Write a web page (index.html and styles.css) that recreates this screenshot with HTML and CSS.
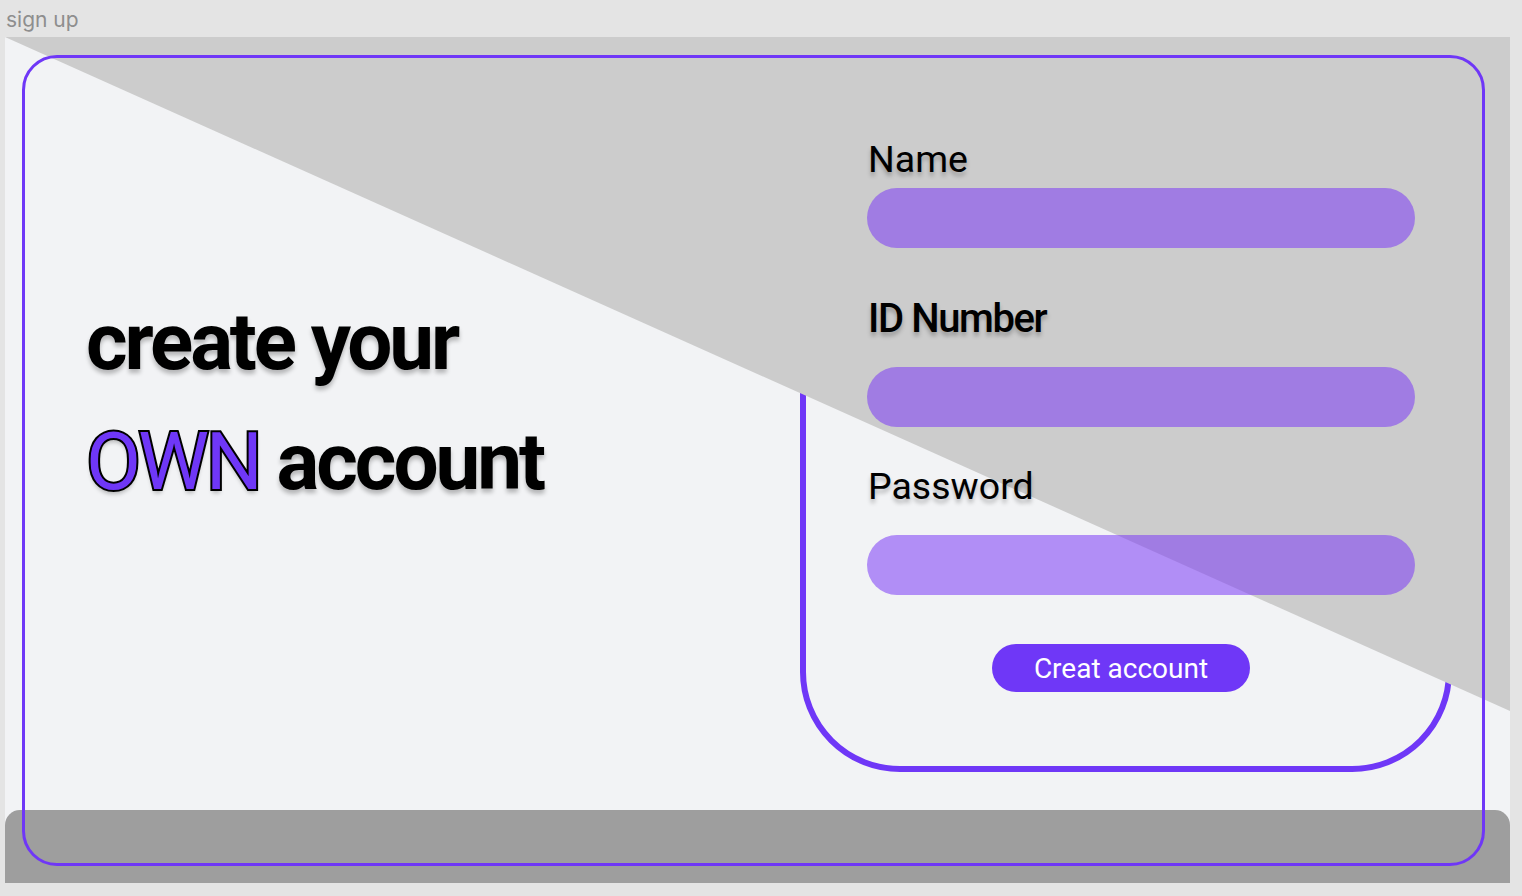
FILE: index.html
```html
<!DOCTYPE html>
<html lang="en">
<head>
<meta charset="utf-8">
<title>sign up</title>
<link rel="stylesheet" href="styles.css">
</head>
<body>
<div class="frame-label">sign up</div>
<main class="frame">
  <div class="content">
    <section class="hero">
      <h1 class="title">
        <span class="title-line">create your</span>
        <span class="title-line"><span class="own">OWN</span> account</span>
      </h1>
    </section>
    <section class="card">
      <form class="form">
        <label class="field-label name-label" for="name">Name</label>
        <input class="field" id="name" type="text">
        <label class="field-label id-label" for="idnum">ID Number</label>
        <input class="field id-field" id="idnum" type="text">
        <label class="field-label pass-label" for="pass">Password</label>
        <input class="field pass-field" id="pass" type="password">
        <button class="submit" type="button">Creat account</button>
      </form>
    </section>
  </div>
  <footer class="bar"></footer>
  <div class="shade"></div>
  <div class="outline"></div>
</main>
</body>
</html>
```

FILE: styles.css
```css
* { box-sizing: border-box; }

body {
  margin: 0;
  background: #e4e4e4;
  width: 1522px;
  height: 896px;
  overflow: hidden;
  font-family: Roboto, "Noto Sans", sans-serif;
}

.frame-label {
  height: 37px;
  padding: 7px 0 0 6px;
  font-family: Inter, Roboto, sans-serif;
  font-size: 21px;
  line-height: 26px;
  color: #8e8e8e;
}

.frame {
  position: relative;
  margin-left: 5px;
  width: 1505px;
  height: 846px;
  background: #f2f3f5;
  display: flex;
  flex-direction: column;
}

.content {
  flex: 1;
  display: flex;
  min-height: 0;
}

.hero {
  position: relative;
  z-index: 2;
  padding: 245px 0 0 81px;
}

.title {
  margin: 0;
  font-size: 80px;
  line-height: 120px;
  font-weight: 700;
  letter-spacing: -3.1px;
  color: #000;
  text-shadow: 0 4px 4px rgba(0, 0, 0, 0.25);
}

.title-line { display: block; white-space: nowrap; }

.own {
  font-weight: 400;
  color: #6f37f7;
  -webkit-text-stroke: 4px #000;
  paint-order: stroke fill;
}

.card {
  margin: 63px 58px 38px auto;
  width: 652px;
  border: 6px solid #6f37f7;
  border-radius: 100px;
  padding: 32px 31px 0 61px;
}

.form {
  position: relative;
  z-index: 2;
  display: flex;
  flex-direction: column;
  align-items: flex-start;
}

.field-label {
  margin-left: 1px;
  font-size: 37.5px;
  line-height: 42px;
  color: #000;
  text-shadow: 0 4px 4px rgba(0, 0, 0, 0.25);
}

.id-label {
  margin-top: 50px;
  font-size: 40px;
  font-weight: 500;
  letter-spacing: -1.4px;
}

.pass-label { margin-top: 38px; }

.field {
  margin-top: 8px;
  width: 548px;
  height: 60px;
  border: 0;
  border-radius: 30px;
  background: rgba(124, 58, 246, 0.55);
  outline: none;
}

.id-field { margin-top: 27px; }
.pass-field { margin-top: 28px; }

.submit {
  margin: 49px 0 0 125px;
  width: 258px;
  height: 48px;
  border: 0;
  border-radius: 24px;
  background: #6f37f7;
  color: #fff;
  font-family: Roboto, sans-serif;
  font-size: 28px;
  line-height: 50px;
  padding: 0;
}

.bar {
  height: 73px;
  flex: none;
  background: #9e9e9e;
  border-radius: 15px 15px 0 0;
}

.shade {
  position: absolute;
  inset: 0;
  z-index: 1;
  background: #cccccc;
  clip-path: polygon(0 0, 100% 0, 100% 674px, 0 0);
  pointer-events: none;
}

.outline {
  position: absolute;
  top: 18px;
  left: 17px;
  right: 25px;
  bottom: 17px;
  z-index: 3;
  border: 3px solid #6f37f7;
  border-radius: 35px;
  pointer-events: none;
}
```
